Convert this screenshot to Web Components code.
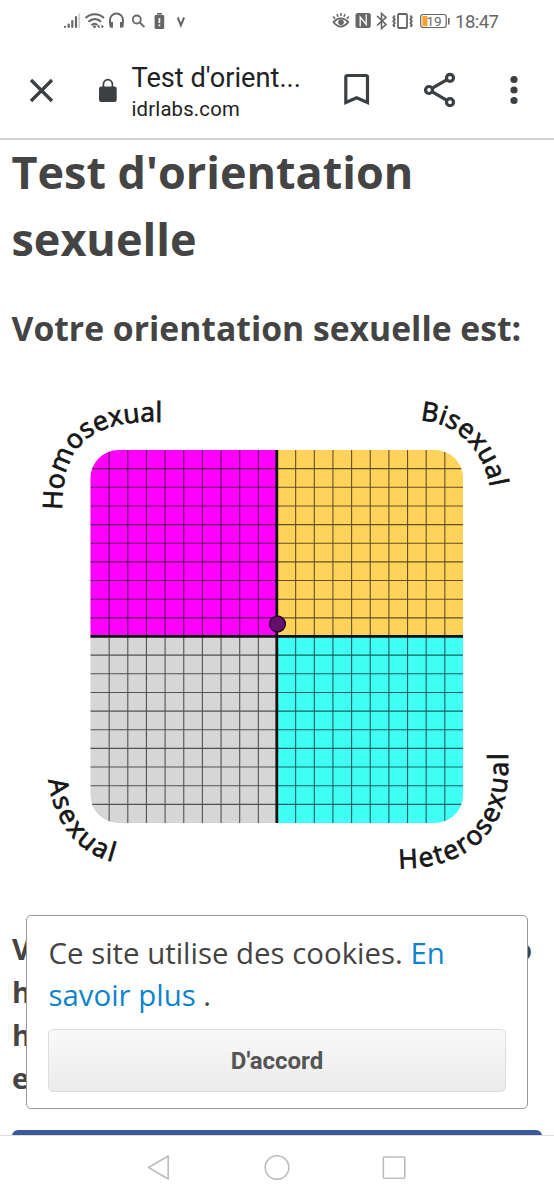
<!DOCTYPE html>
<html lang="fr">
<head>
<meta charset="utf-8">
<title>Test d'orientation sexuelle</title>
<style>
body { margin: 0; background: #fff; font-family: "Open Sans", "Noto Sans", sans-serif; color: #444; }
</style>
</head>
<body>
<phone-screen>
  <status-bar slot="top"></status-bar>
  <browser-bar slot="top"><span slot="title">Test d'orient...</span><span slot="host">idrlabs.com</span></browser-bar>
  <result-page>
    <span slot="title">Test d'orientation<br>sexuelle</span>
    <span slot="subtitle">Votre orientation sexuelle est:</span>
    <orientation-chart></orientation-chart>
  </result-page>
  <cookie-notice slot="overlay">
    <span>Ce site utilise des cookies.</span>
    <span slot="link">En</span>
    <span slot="link-end">savoir plus</span>
    <span slot="action">D'accord</span>
  </cookie-notice>
  <nav-bar slot="bottom"></nav-bar>
</phone-screen>
<script>
function define(name, html) {
  const t = document.createElement('template');
  t.innerHTML = html;
  customElements.define(name, class extends HTMLElement {
    constructor() {
      super();
      this.attachShadow({ mode: 'open' }).append(t.content.cloneNode(true));
    }
  });
}

define('phone-screen', `
<style>
:host { display: flex; flex-direction: column; width: 554px; height: 1200px; position: relative; overflow: hidden; background: #fff; }
main { flex: 1; min-height: 0; overflow: hidden; }
</style>
<slot name="top"></slot><main><slot></slot></main><slot name="bottom"></slot><slot name="overlay"></slot>`);

define('status-bar', `
<style>
:host { display: flex; height: 43px; flex: none; }
svg { display: block; }
text { font-family: Roboto, sans-serif; fill: #666; }
</style>
<svg width="554" height="43" viewBox="0 0 554 43" fill="none" stroke="#666" stroke-width="1.8">
  <g stroke-width="2.2" stroke-linecap="round">
    <path d="M65 26.8v.2M68.7 24.5v2.5M72.3 21v6M76 17v10"/><path d="M79.3 14v13.5" stroke="#ccc" stroke-width="1.6"/>
  </g>
  <g stroke-width="2"><path d="M85.5 18c5.5-5 13-5 18.500 0M88.500 21.800c4-3.600 8.800-3.600 12.600 0M91.500 25.200c2-2 4.200-2 6 0"/></g>
  <circle cx="94.500" cy="26.700" r="1.400" fill="#666" stroke="none"/><path d="M97 26.500l2.500-1.900v3.800zM104 26.500l-2.500-1.900v3.800z" fill="#666" stroke="none"/>
  <path d="M110 23v-3a6.500 6.500 0 0 1 13 0v3" stroke-width="2"/>
  <path d="M109.300 22h3.700v5.800h-1.700q-2 0-2-2zM120 22h3.700v3.800q0 2-2 2H120z" fill="#666" stroke="none"/>
  <circle cx="136.800" cy="19.500" r="4"/><path d="M139.800 22.500l4.600 4.600"/>
  <rect x="154.600" y="15" width="9.600" height="14" rx="1.300" fill="#666" stroke="none"/><path d="M157 13.800h5" stroke-width="1.600"/><path d="M159.400 18v5M159.400 24.500v1.700" stroke="#fff" stroke-width="1.700"/>
  <path d="M177.700 17.500l3.200 7.800 3.200-7.800" stroke-width="2"/>
  <path d="M333.500 22.200q7.300-7.500 14.800 0-7.500 8.800-14.800 0z"/><circle cx="341" cy="22.300" r="2.800" fill="#666" stroke="none"/><path d="M333 16.500l2.200 2.300M337 14l1 2.800M341 13v3M345 14l-1 2.800M349 16.500l-2.200 2.300" stroke-width="1.500"/>
  <rect x="355.500" y="13" width="15.300" height="15" rx="2.300" fill="#666" stroke="none"/>
  <path d="M360.200 26.500V17l6 7.500V14.500" stroke="#fff" stroke-width="1.300"/>
  <path d="M377 16l9 8.500-4.500 4V13.500l4.500 3.900-9 8.100" stroke-width="1.600"/>
  <rect x="398" y="14" width="9" height="14" rx="1" /><path d="M394.800 15.500l-1.400 2 1.400 1.800-1.400 2 1.400 1.800-1.400 2 1.400 1.700M410.400 15.500l1.400 2-1.400 1.800 1.400 2-1.400 1.800 1.400 2-1.400 1.700" stroke-width="1.900"/>
  <rect x="420.700" y="14.500" width="25.500" height="13" rx="2.500" stroke-width="1.200"/>
  <rect x="422.400" y="16" width="5" height="10.200" fill="#f7a02c" stroke="none"/><path d="M448.800 18v6.500" stroke-width="1.600"/>
  <text x="426.500" y="25.900" font-size="13.500" textLength="15" stroke="none">19</text>
  <text x="455" y="27.700" font-size="18.500" textLength="44" stroke="none">18:47</text>
</svg>`);

define('browser-bar', `
<style>
:host { display: flex; height: 97px; box-sizing: border-box; flex: none; align-items: center; border-bottom: 2px solid #d2d2d2; color: #202124; font-family: Roboto, sans-serif; }
.close { margin-left: 29px; width: 25px; height: 25px; }
.lock { margin: 0 0 0 44px; width: 20px; height: 26px; }
.words { width: 180px; margin: 5px 0 0 13.500px; display: flex; flex-direction: column; white-space: nowrap; }
.t { font-size: 27.200px; line-height: 33px; }
.h { font-size: 20.300px; line-height: 29px; letter-spacing: .18px; }
.actions { margin: -2px 0 0 32px; width: 174px; height: 40px; }
svg { display: block; flex: none; }
</style>
<svg class="close" viewBox="0 0 25 25" stroke="#3c4043" stroke-width="3.300" fill="none"><path d="M2 2l21 21M23 2L2 23"/></svg>
<svg class="lock" viewBox="0 0 20 26"><rect x="1" y="8.500" width="17.700" height="15.500" rx="2.300" fill="#3c4043"/><path d="M5.400 9V6.200a4.500 4.500 0 0 1 9 0V9" fill="none" stroke="#3c4043" stroke-width="1.700"/></svg>
<div class="words"><div class="t"><slot name="title"></slot></div><div class="h"><slot name="host"></slot></div></div>
<svg class="actions" viewBox="344 70 174 40" fill="none" stroke="#3c4043" stroke-width="3.200">
  <path d="M345.800 102.500V77.200q0-1.700 1.700-1.700h18.300q1.700 0 1.700 1.700V102.500l-10.900-4.700z"/>
  <path d="M450 77.800L429 90l21 12.200"/><g fill="#fff"><circle cx="450" cy="77.800" r="3.500"/><circle cx="429" cy="90" r="3.500"/><circle cx="450" cy="102.200" r="3.500"/></g>
  <g fill="#3c4043" stroke="none"><circle cx="514" cy="79.500" r="3.600"/><circle cx="514" cy="90" r="3.600"/><circle cx="514" cy="100.500" r="3.600"/></g>
</svg>`);

define('result-page', `
<style>
:host { display: flex; flex-direction: column; padding: 0 12px; height: 1040px; box-sizing: border-box; }
h1 { margin: -2px 0 0 -.5px; font-size: 44.950px; line-height: 67px; font-weight: 700; white-space: nowrap; }
h2 { margin: 31px 0 0 -.5px; font-size: 33.700px; line-height: 51px; font-weight: 700; white-space: nowrap; }
.chart { margin: 32px -12px 0; height: 500px; flex: none; }
.copy { display: flex; justify-content: space-between; margin-top: 41px; font-size: 28.800px; line-height: 43px; font-weight: 700; }
.copy div { height: 172px; }
.copy .end { margin-right: 10px; }
.share { margin-top: 31px; height: 50px; flex: none; border-radius: 6px; background: #3b5998; }
</style>
<h1><slot name="title"></slot></h1>
<h2><slot name="subtitle"></slot></h2>
<div class="chart"><slot></slot></div>
<div class="copy"><div>V<br>h<br>h<br>e</div><div class="end">o</div></div>
<div class="share"></div>`);

customElements.define('orientation-chart', class extends HTMLElement {
  constructor() {
    super();
    let lines = '';
    for (let i = 1; i < 20; i++) {
      if (i === 10) continue;
      const p = (i * 18.65).toFixed(2);
      lines += `M${90.5 + +p} 450V823M90 ${450 + +p}H463`;
    }
    this.attachShadow({ mode: 'open' }).innerHTML = `
<style>
:host { display: block; }
svg { display: block; }
text { font: 400 26.500px "Open Sans", sans-serif; fill: #161616; stroke: #161616; stroke-width: .8px; }
</style>
<svg width="554" height="500" viewBox="0 386 554 500">
  <defs>
    <clipPath id="r"><rect x="90.500" y="450" width="372.500" height="373" rx="28"/></clipPath>
    <path id="a" d="M62 510C62 447 88 421.500 156 421.500H180"/>
    <path id="b" d="M420 420.500C457 422 484 450 490 488l2 14"/>
    <path id="c" d="M48.500 780C53 820 76 853 113 862l12 3"/>
    <path id="d" d="M398.500 868.500C458 868.500 508 842 508 768V730"/>
  </defs>
  <g clip-path="url(#r)">
    <path fill="#f0f" d="M90 450h187v186H90z"/><path fill="#ffd25a" d="M277 450h187v186H277z"/>
    <path fill="#d6d6d6" d="M90 636h187v188H90z"/><path fill="#40fff5" d="M277 636h187v188H277z"/>
    <path d="${lines}" stroke="#000" stroke-opacity=".62" stroke-width="1.100" fill="none"/>
    <path d="M276.800 450V823M90 636.300H463" stroke="#111" stroke-width="2.800"/>
  </g>
  <circle cx="277.500" cy="624" r="7.900" fill="#651070" stroke="#26062c" stroke-width="1.500"/>
  <text><textPath href="#a" textLength="156.500">Homosexual</textPath></text>
  <text><textPath href="#b" textLength="105">Bisexual</textPath></text>
  <text><textPath href="#c" textLength="111">Asexual</textPath></text>
  <text><textPath href="#d" textLength="184">Heterosexual</textPath></text>
</svg>`;
  }
});

define('cookie-notice', `
<style>
:host { position: absolute; left: 26px; top: 915px; width: 502px; height: 194px; box-sizing: border-box; border: 1.500px solid #999; border-radius: 5px; background: #fff; padding: 16px 21px 0; display: flex; flex-direction: column; }
p { margin: 0 0 0 .5px; font-size: 29.400px; line-height: 42px; white-space: nowrap; }
a { color: #0e84cc; }
button { margin-top: 13px; height: 63px; flex: none; border: 1.500px solid #ddd; border-radius: 5px; background: linear-gradient(#f9f9f9, #ebebeb); font: 700 24px Roboto, sans-serif; color: #555; padding: 0; }
</style>
<p><slot></slot> <a><slot name="link"></slot></a><br><a><slot name="link-end"></slot></a> .</p>
<button><slot name="action"></slot></button>`);

define('nav-bar', `
<style>
:host { display: flex; flex: none; height: 65px; box-sizing: border-box; border-top: 1px solid #ddd; background: #fff; }
svg { display: block; }
</style>
<svg width="554" height="64" viewBox="0 1136 554 64" fill="none" stroke="#bdbdbd" stroke-width="1.600" stroke-linejoin="round">
  <path d="M168.200 1156v23L148.500 1167.500z"/><circle cx="277" cy="1167.500" r="11.800"/><rect x="383.300" y="1157" width="21.500" height="21.300" rx="1"/>
</svg>`);
</script>
</body>
</html>
